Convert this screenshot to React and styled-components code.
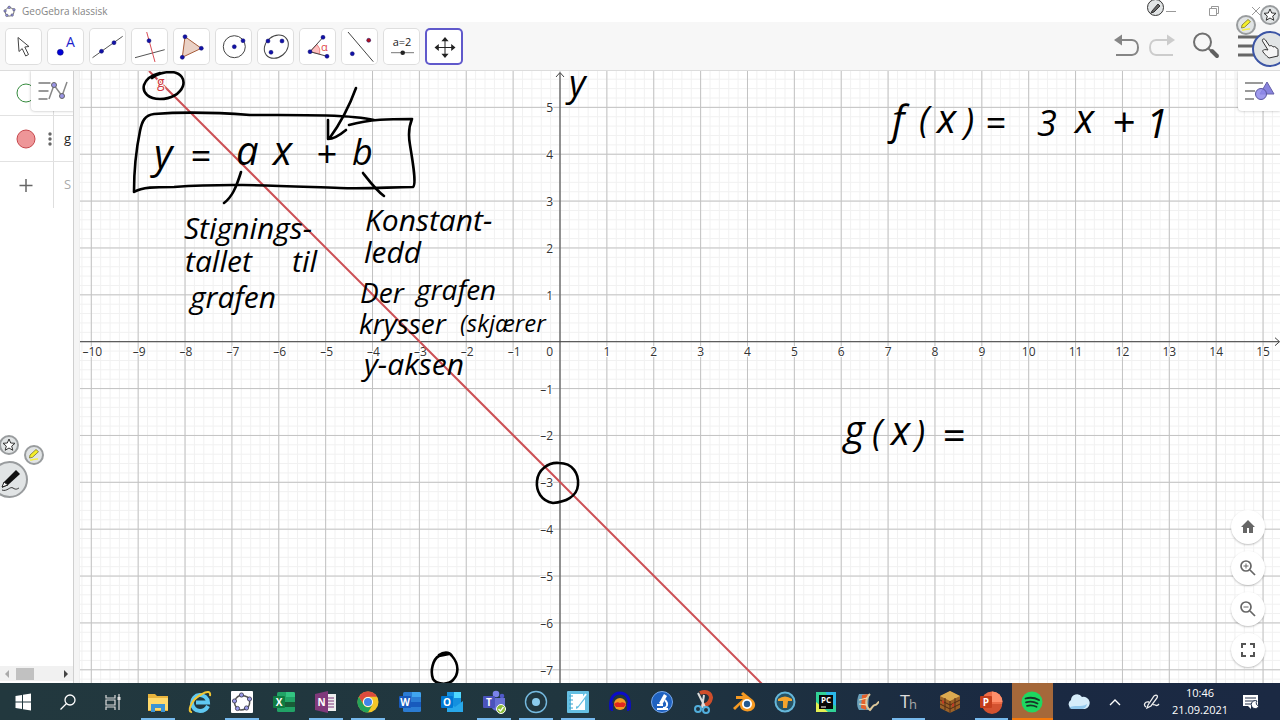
import React from "react";
import styled, { createGlobalStyle, css } from "styled-components";

const GlobalStyle = createGlobalStyle`
  *, *::before, *::after { box-sizing: border-box; }
  body { margin: 0; background: #fff; font-family: "Open Sans", "Noto Sans", sans-serif; overflow: hidden; }
  button { font: inherit; color: inherit; margin: 0; padding: 0; border: 0; background: none; cursor: pointer; }
  svg { display: block; }
`;

/* ---------- frame ---------- */

const Screen = styled.div`
  position: relative;
  display: grid;
  grid-template-rows: 22px 49px minmax(0, 1fr) 37px;
  height: 100vh;
`;

const TitleBar = styled.header`
  display: flex;
  align-items: center;
  gap: 6px;
  padding: 0 2px 0 3px;
  background: #fff;
`;

const Title = styled.h1`
  flex: 1;
  margin: 0;
  font-size: 10px;
  line-height: 22px;
  font-weight: 400;
  color: #858585;
`;

const WindowButton = styled.button`
  display: grid;
  place-items: center;
  width: 43px;
  height: 20px;
  margin-left: -6px;
  padding-right: ${(p) => (p.$last ? "2px" : "0")};
`;

const ToolBar = styled.nav`
  display: flex;
  align-items: center;
  padding: 0 17px 0 5px;
  background: #f7f7f7;
  border-bottom: 1px solid #dcdcdc;
`;

const ToolGroup = styled.div`
  display: flex;
  flex: 1;
  gap: 5px;
`;

const ToolButton = styled.button`
  width: 37px;
  height: 37px;
  border-radius: 5px;
  background: #fff;
  box-shadow: inset 0 0 0 1px #dedede;
  ${(p) =>
    p.$active &&
    css`
      width: 38px;
      box-shadow: inset 0 0 0 2px #6059cb;
    `}
`;

const Actions = styled.div`
  display: flex;
  align-items: center;
  gap: 18px;
`;

const History = styled.div`
  display: flex;
  gap: 8px;
`;

const Work = styled.main`
  display: flex;
  min-height: 0;
`;

/* ---------- algebra panel ---------- */

const AlgebraPanel = styled.aside`
  position: relative;
  display: flex;
  flex-direction: column;
  flex: 0 0 74px;
  border-right: 1px solid #cfcfcf;
  background: #fff;
  overflow: hidden;
`;

const AlgebraRow = styled.div`
  display: grid;
  grid-template-columns: 54px 1fr;
  height: ${(p) => (p.$first ? "45px" : "46px")};
  border-bottom: ${(p) => (p.$last ? "0" : "1px solid #e2e2e2")};
`;

const Marker = styled.div`
  display: flex;
  align-items: center;
  justify-content: flex-end;
  gap: 12px;
  border-right: 1px solid #dedede;
  padding-right: ${(p) => (p.$wide ? "17px" : "0")};
`;

const Expression = styled.div`
  padding-left: 10px;
  font-size: 13px;
  line-height: 44px;
  color: ${(p) => (p.$muted ? "#aaa" : "#222")};
  white-space: nowrap;
`;

const StyleButton = styled.button`
  position: absolute;
  top: 0;
  ${(p) => (p.$side === "left" ? "left: 31px; width: 43px;" : "right: 0; width: 42px;")}
  height: 40px;
  background: #fff;
  border-radius: 0 0 0 4px;
  box-shadow: 0 0 3px rgba(0, 0, 0, 0.3);
`;

const ScrollBar = styled.div`
  display: flex;
  align-items: center;
  gap: 6px;
  height: 15px;
  margin: auto 0 2px;
  padding: 0 4px;
  background: #f1f1f1;
`;

const Thumb = styled.div`
  width: 18px;
  height: 12px;
  background: #c1c1c1;
  margin-right: auto;
`;

const Splitter = styled.div`
  flex: 0 0 6px;
  background: #f5f5f5;
  border-right: 1px solid #eee;
`;

/* ---------- graphics view ---------- */

const GraphView = styled.section`
  position: relative;
  flex: 1;
  min-width: 0;
  overflow: hidden;
`;

const Plot = styled.svg`
  width: 100%;
  height: 100%;
`;

const AxisLabel = styled.text`
  font-family: "Open Sans", "Noto Sans", sans-serif;
  font-size: ${(p) => (p.$name ? 14 : 12)}px;
  fill: ${(p) => (p.$name ? "#d03b42" : "#333")};
  stroke: #fff;
  stroke-width: 2px;
  paint-order: stroke;
`;

const Note = styled.text`
  font-family: "Open Sans", "Noto Sans", sans-serif;
  font-style: italic;
  font-size: ${(p) => p.$size}px;
  fill: #000;
`;

const ZoomControls = styled.div`
  position: absolute;
  right: 15px;
  bottom: 16px;
  display: flex;
  flex-direction: column;
  gap: 7px;
`;

const RoundButton = styled.button`
  display: grid;
  place-items: center;
  width: 34px;
  height: 34px;
  border-radius: 50%;
  background: #fff;
  box-shadow: 0 1px 2px rgba(0, 0, 0, 0.25);
`;

/* ---------- floating pen menu ---------- */

const PenButton = styled.button`
  position: absolute;
  left: ${(p) => p.$x};
  top: ${(p) => p.$y}px;
  display: grid;
  place-items: center;
  width: ${(p) => p.$size}px;
  height: ${(p) => p.$size}px;
  border-radius: 50%;
  border: ${(p) => (p.$blue ? "2px solid #3c55a5" : p.$dark ? "1px solid #333" : "2px solid #999c9e")};
  background: #e1e4e5;
`;

/* ---------- task bar ---------- */

const TaskBar = styled.footer`
  display: flex;
  background: linear-gradient(90deg, #22383e 0%, #20363f 45%, #1a2942 80%, #1b2943 100%);
`;

const TaskItem = styled.button`
  position: relative;
  flex: 1;
  display: grid;
  place-items: center;
  min-width: 0;
  background: ${(p) => (p.$alert ? "#a5683a" : "none")};
  &::after {
    content: "";
    display: ${(p) => (p.$open || p.$alert ? "block" : "none")};
    position: absolute;
    left: ${(p) => (p.$alert ? "0" : "4px")};
    right: ${(p) => (p.$alert ? "0" : "4px")};
    bottom: 0;
    height: 2px;
    background: ${(p) => (p.$alert ? "#f5790b" : "#76b9ed")};
  }
`;

const SystemGroup = styled.div`
  display: flex;
  flex: 0 0 137px;
  padding-right: 2px;
`;

const AppGroup = styled.div`
  display: flex;
  flex: 1;
  min-width: 0;
  ${TaskItem}:nth-child(-n + 12) {
    flex: 0 1 42px;
  }
`;

const Tray = styled.div`
  display: flex;
  align-items: center;
  flex: 0 0 227px;
  padding-left: 8px;
`;

const TrayButton = styled.button`
  display: grid;
  place-items: center;
  width: ${(p) => (p.$wide ? "40px" : "34px")};
  height: 37px;
`;

const Clock = styled.time`
  width: 62px;
  font-size: 11px;
  line-height: 17px;
  text-align: center;
  color: #fff;
  padding-bottom: 2px;
`;

/* ---------- tool icons ---------- */

const Dot = ({ x, y, r = 2, fill = "#1111a8" }) => <circle cx={x} cy={y} r={r} fill={fill} stroke="#11116a" strokeWidth=".5" />;

const TOOLS = [
  { name: "Move", art: <path d="M13 9.5 24 18.5 19.8 19 23.5 26.5 20.7 28 17.2 20.6 14 23.5Z" fill="#fff" stroke="#444" /> },
  { name: "Point", art: <><Dot x={13.3} y={24.3} r={3} fill="#0000d8" /><text x="19" y="19" fontSize="14" fill="#1d1dcc">A</text></> },
  { name: "Line", art: <><path d="M3.5 29.7 33.7 8.3" stroke="#555" /><Dot x={12.5} y={23.3} /><Dot x={25} y={14.7} /></> },
  { name: "Perpendicular line", art: <><path d="M4 29.7 33.7 21.7" stroke="#555" /><path d="M15.7 4 24 34" stroke="#d94e57" /><Dot x={18} y={12.7} /></> },
  { name: "Polygon", art: <><path d="M12 8.7 28.3 20.3 9.3 29.3Z" fill="#ead1c5" stroke="#a65b39" /><Dot x={12} y={8.7} /><Dot x={28.3} y={20.3} /><Dot x={9.3} y={29.3} /></> },
  { name: "Circle", art: <><circle cx="19.3" cy="18.7" r="11" stroke="#444" /><Dot x={19.3} y={18.7} /><Dot x={28} y={12.7} /></> },
  { name: "Ellipse", art: <><ellipse cx="19.3" cy="18.7" rx="13" ry="10.5" transform="rotate(-40 19.3 18.7)" stroke="#444" /><Dot x={11} y={13} /><Dot x={25} y={13} /><Dot x={14} y={24.3} /></> },
  { name: "Angle", art: <><path d="M11 23.7 18 16.5A10 10 0 0 1 20.7 26Z" fill="#ffc0c0" stroke="#ef8888" /><path d="M24 9.3 11 23.7 28 28.3" stroke="#444" /><Dot x={24} y={9.3} /><Dot x={11} y={23.7} /><Dot x={28} y={28.3} /><text x="22" y="23" fontSize="11" fill="#e04848">α</text></> },
  { name: "Reflect", art: <><path d="M7 4 32.3 33.7" stroke="#444" /><Dot x={27.7} y={12.3} fill="#b0101e" /><Dot x={11.3} y={25.7} /></> },
  { name: "Slider", art: <><text x="19" y="18" fontSize="11" textAnchor="middle" fill="#222">a=2</text><path d="M8 24.7H31" stroke="#777" /><circle cx="19.7" cy="24.7" r="2.3" fill="#222" /></> },
  { name: "Move graphics view", active: true, art: <><path d="M20 11V28M11.500 19.500H28.500" stroke="#222" /><path d="m20 9 3.600 4.300h-7.200ZM20 30l3.600-4.300h-7.200ZM9.500 19.500l4.300-3.600v7.200ZM30.500 19.500l-4.300-3.600v7.200Z" fill="#222" /></> },
];

const HighlighterArt = () => (
  <svg width="14" height="14" viewBox="0 0 14 14" fill="none">
    <path d="m3 7 6-5.500 2.500 2.200-6 5.600-3 .7Z" fill="#f5ef28" stroke="#77752c" strokeWidth=".8" />
    <path d="M3 12c3 0 4-1.500 8-1" stroke="#f4ef4a" strokeWidth="1.500" />
  </svg>
);

const StarArt = () => (
  <svg width="14" height="14" viewBox="0 0 14 14">
    <path d="m7 1 1.7 4 4.3.3-3.3 2.8 1.1 4.2L7 10l-3.8 2.3 1.1-4.2L1 5.3 5.3 5Z" fill="#fff" stroke="#333" />
  </svg>
);

const GeoGebraMark = ({ size }) => (
  <svg width={size} height={size} viewBox="0 0 22 22">
    <path d="M10.500 4.500C15 5 18 6.500 18.500 8.500C19 12 18 16 15.500 17.500C12 19 8 19.500 6.500 17.500C4 15 3 12 4 9.500C5 7 7 4.500 10.500 4.500Z" fill="none" stroke="#555" strokeWidth="1.400" />
    {[[10.5, 4], [18.5, 8], [15.5, 17], [6.5, 17.5], [3.5, 10]].map(([x, y]) => (
      <circle key={`${x}-${y}`} cx={x} cy={y} r="2.100" fill="#9999e8" stroke="#353545" strokeWidth=".8" />
    ))}
  </svg>
);

/* ---------- plot data ---------- */

const UNIT = 46.87;
const OX = 560;
const OY = 341.7;
const range = (a, b) => Array.from({ length: b - a + 1 }, (_, i) => a + i);
const px = (n) => OX + n * UNIT;
const py = (n) => OY - n * UNIT;
const label = (n) => (n < 0 ? `–${-n}` : `${n}`);

const NOTES = [
  { x: 569, y: 96, size: 36, text: "y" },
  { x: 154, y: 168, size: 40, text: "y" },
  { x: 190, y: 169, size: 36, text: "=" },
  { x: 236, y: 165, size: 40, text: "a" },
  { x: 273, y: 165, size: 40, text: "x" },
  { x: 316, y: 167, size: 36, text: "+" },
  { x: 352, y: 165, size: 36, text: "b" },
  { x: 184, y: 239, size: 30, text: "Stignings-" },
  { x: 185, y: 272, size: 30, text: "tallet" },
  { x: 292, y: 272, size: 30, text: "til" },
  { x: 190, y: 308, size: 30, text: "grafen" },
  { x: 365, y: 231, size: 30, text: "Konstant-" },
  { x: 364, y: 263, size: 30, text: "ledd" },
  { x: 360, y: 303, size: 28, text: "Der" },
  { x: 416, y: 300, size: 28, text: "grafen" },
  { x: 359, y: 334, size: 28, text: "krysser" },
  { x: 460, y: 332, size: 24, text: "(skjærer" },
  { x: 364, y: 375, size: 30, text: "y-aksen" },
  { x: 892, y: 134, size: 40, text: "f" },
  { x: 919, y: 132, size: 36, text: "(" },
  { x: 937, y: 133, size: 40, text: "x" },
  { x: 964, y: 134, size: 36, text: ")" },
  { x: 985, y: 136, size: 36, text: "=" },
  { x: 1037, y: 136, size: 36, text: "3" },
  { x: 1075, y: 133, size: 40, text: "x" },
  { x: 1112, y: 137, size: 40, text: "+" },
  { x: 1146, y: 138, size: 40, text: "1" },
  { x: 844, y: 444, size: 40, text: "g" },
  { x: 872, y: 445, size: 36, text: "(" },
  { x: 891, y: 445, size: 40, text: "x" },
  { x: 915, y: 446, size: 36, text: ")" },
  { x: 942, y: 450, size: 40, text: "=" },
];

const INK = [
  "M152 78C158 73 164 72 172 72C181 73 185 79 183 86C180 94 171 99 160 99C149 99 142 93 144 85C146 79 152 75 160 73",
  "M374 120C350 114 290 115 250 115C210 112 180 112 154 114C145 115 142 121 140 131C135 155 134 175 134 192C142 187 155 187 174 187C230 183 280 186 340 188C370 189 390 187 413 187C417 184 412 158 410 145C408 134 409 126 412 119C390 119 370 119 349 125",
  "M356 88C348 110 340 124 329 139M328 120V139C334 139 340 135 346 130",
  "M241 172C236 188 232 197 224 203",
  "M363 173C370 182 376 190 384 196",
  "M559 463C573 463 579 474 578 485C577 497 565 502 553 503C541 501 536 491 537 481C538 470 548 462 559 463Z",
  "M439 655C443 652 449 651 452 656C459 664 459 674 453 680C447 686 436 684 433 679C430 671 433 659 439 656L449 654",
];

function Graph() {
  return (
    <Plot viewBox="80 71 1200 612" preserveAspectRatio="xMinYMin slice" role="img" aria-label="Graph of g with handwritten notes">
      <g stroke="#f1f1f1">
        {range(-51, 77).map((i) => <path key={`v${i}`} d={`M${px(i / 5)} 71V683`} />)}
        {range(-37, 29).map((i) => <path key={`h${i}`} d={`M80 ${py(i / 5)}H1280`} />)}
      </g>
      <g stroke="#c2c2c2">
        {range(-10, 15).map((i) => <path key={`v${i}`} d={`M${px(i)} 71V683`} />)}
        {range(-7, 5).map((i) => <path key={`h${i}`} d={`M80 ${py(i)}H1280`} />)}
      </g>
      <g stroke="#444" fill="none">
        <path d="M560 683V73M556 77 560 72.500 564 77" />
        <path d="M80 341.700H1279M1275 337.700 1279.500 341.700 1275 345.700" />
      </g>
      {range(-10, 15).filter(Boolean).map((i) => (
        <AxisLabel key={`x${i}`} x={px(i) + (i < 0 ? 1 : 0)} y="356" textAnchor="middle">{label(i)}</AxisLabel>
      ))}
      <AxisLabel x="553" y="356" textAnchor="end">0</AxisLabel>
      {range(-7, 5).filter(Boolean).map((i) => (
        <AxisLabel key={`y${i}`} x="553" y={py(i) + 5} textAnchor="end">{label(i)}</AxisLabel>
      ))}
      <path d="M149 71 762 684" stroke="#cc5055" strokeWidth="2" />
      <AxisLabel $name x="157" y="87">g</AxisLabel>
      {NOTES.map((n) => <Note key={`${n.x}-${n.y}`} x={n.x} y={n.y} $size={n.size}>{n.text}</Note>)}
      <g fill="none" stroke="#000" strokeWidth="2.600" strokeLinecap="round" strokeLinejoin="round">
        {INK.map((d) => <path key={d} d={d} />)}
      </g>
    </Plot>
  );
}

/* ---------- task bar icons, all on a 24 unit canvas ---------- */

const OfficeArt = ({ letter, tile, colors }) => (
  <>
    <rect x="5" y="2" width="18" height="20" rx="1.500" fill={colors[0]} />
    <path d="M14 2h7.500a1.500 1.500 0 0 1 1.500 1.500V7h-9Z" fill={colors[1]} />
    <path d="M5 12h18v5H5Z" fill={colors[2]} />
    <rect x="1" y="6" width="12" height="12" rx="1" fill={tile} />
    <text x="7" y="15.500" fontSize="10" fontWeight="700" textAnchor="middle" fill="#fff">{letter}</text>
  </>
);

const APPS = [
  { name: "File Explorer", open: true, art: <><path d="M2 4h7l2 2h11v15H2Z" fill="#e9b43d" /><path d="M2 8h20v12H2Z" fill="#ffd96b" /><path d="M5 22v-8h14v8h-4v-4H9v4Z" fill="#3c94d4" /></> },
  { name: "Internet Explorer", art: <><path d="M20 16c-2 4-5 5-8 5a8 8 0 1 1 8-8.500H8" fill="none" stroke="#60c9f1" strokeWidth="4" /><path d="M4 22C-1 23 2 10 14 4C19 1 23 1 22 6" fill="none" stroke="#f2c633" strokeWidth="2" /></> },
  { name: "GeoGebra", open: true, art: <><rect x="1" y="1" width="22" height="22" rx="1" fill="#fff" /><g transform="translate(1 1)"><GeoGebraMark size={22} /></g></> },
  { name: "Excel", art: <OfficeArt letter="X" tile="#107c41" colors={["#21a366", "#33c481", "#185c37"]} /> },
  { name: "OneNote", open: true, art: <><rect x="10" y="4" width="12" height="17" fill="#eee" /><path d="M13 8h7M13 11h7M13 14h7M13 17h7" stroke="#80397b" /><path d="m1 4 13-3v22L1 20Z" fill="#80397b" /><text x="7.500" y="16" fontSize="10" fontWeight="700" textAnchor="middle" fill="#fff">N</text></> },
  { name: "Chrome", open: true, art: <><circle cx="12" cy="12" r="10.500" fill="#f5c629" /><path d="M2.900 6.700A10.500 10.500 0 0 1 21.100 6.700H12a5.300 5.300 0 0 0-4.600 8Z" fill="#dd4b3e" /><path d="M2.900 6.700A10.500 10.500 0 0 0 12 22.500l4.600-7.900a5.300 5.300 0 0 1-9.200 0Z" fill="#24a35a" /><circle cx="12" cy="12" r="5" fill="#fff" /><circle cx="12" cy="12" r="4" fill="#4285e8" /></> },
  { name: "Word", art: <OfficeArt letter="W" tile="#185abd" colors={["#2b7cd3", "#41a5ee", "#185abd"]} /> },
  { name: "Outlook", art: <><rect x="7" y="2" width="14" height="17" fill="#1490df" /><path d="M14 2h7v6h-7Z" fill="#50d9ff" /><path d="m7 11 8 6 8-6v11H7Z" fill="#28a8ea" /><rect x="1" y="6" width="12" height="12" rx="1" fill="#0078d4" /><text x="7" y="15.500" fontSize="10" fontWeight="700" textAnchor="middle" fill="#fff">O</text></> },
  { name: "Teams", open: true, art: <><circle cx="14" cy="4" r="3.300" fill="#7b83eb" /><circle cx="20" cy="6" r="2.300" fill="#5059c9" /><path d="M9 8h14v7a6 6 0 0 1-7 6c-4 0-7-3-7-6Z" fill="#6670d5" /><rect x="1" y="6" width="12" height="12" rx="1" fill="#4b53bc" /><text x="7" y="15.500" fontSize="10" fontWeight="700" textAnchor="middle" fill="#fff">T</text><circle cx="19" cy="19" r="4.500" fill="#8cbd38" stroke="#fff" /><path d="m16.500 19 2 2 3-4" fill="none" stroke="#fff" strokeWidth="1.300" /></> },
  { name: "Recorder", open: true, art: <><circle cx="12" cy="12" r="10.500" fill="none" stroke="#75b9df" strokeWidth="1.400" /><circle cx="12" cy="12" r="4" fill="#8bcbed" /></> },
  { name: "Notebook", open: true, art: <><rect x="1" y="1" width="22" height="22" rx="1" fill="#65bfe2" /><path d="M5 4h12v3l-7 10v2l2-1 7-9v11H5Z" fill="#fff" /><path d="M3 6h4M3 10h4M3 14h4M3 18h4" stroke="#3ba0c9" /><path d="m11 16 9-12" stroke="#fff" strokeWidth="2" /></> },
  { name: "Audacity", art: <><path d="M3 20C1 8 6 3 12 3s11 5 9 17" fill="none" stroke="#0b0bc9" strokeWidth="3" /><path d="M1 13h4v8H3ZM19 13h4l-2 8h-2Z" fill="#1010b8" /><ellipse cx="12" cy="14" rx="6" ry="6" fill="#f29b22" /><path d="M6 14q3-3 6-1 3-2 6 1l-2 3H8Z" fill="#df271f" /></> },
  { name: "Microscope", art: <><circle cx="12" cy="12" r="10.500" fill="#1f62c0" stroke="#79aaed" /><path d="m9 13 5-9 3 2-5 9Z" fill="#fff" /><path d="M15 10c4 4 2 8-2 8M7 19h11M7 15h6" fill="none" stroke="#fff" strokeWidth="1.800" /></> },
  { name: "Snipping Tool", art: <><path d="M9 3c8-3 13 2 10 8-2 4-6 5-8 3" fill="none" stroke="#cf4e2b" strokeWidth="4" /><path d="m7 3 7 14M13 5l-2 13" stroke="#ddd" strokeWidth="2" /><circle cx="7" cy="19" r="3" fill="none" stroke="#52afdc" strokeWidth="2" /><circle cx="15" cy="20" r="3" fill="none" stroke="#52afdc" strokeWidth="2" /></> },
  { name: "Blender", art: <><path d="M1 18 11 9H4V6h7L9 4l2-2 10 8c6 7-2 13-8 11-4-1-5-4-5-6l-5 5Z" fill="#f59a23" /><circle cx="15" cy="14" r="5" fill="#fff" /><circle cx="15" cy="14" r="3.200" fill="#255a92" /></> },
  { name: "Typing", art: <><circle cx="12" cy="12" r="9.500" fill="#285364" stroke="#65b7da" strokeWidth="2" /><path d="M5 9q7-5 14 0v2h-4l-1 7h-4v-7H5Z" fill="#f4a42d" /></> },
  { name: "PyCharm", art: <><path d="M2 2h20v20H2Z" fill="#32d296" /><path d="m12 2 10 0v14l-8-4Z" fill="#2bb8e9" /><path d="M2 12v10h12Z" fill="#e4ef52" /><rect x="5" y="5" width="14" height="14" fill="#080808" /><text x="12" y="13" fontSize="8" fontWeight="700" textAnchor="middle" fill="#fff">PC</text><path d="M7 17h5" stroke="#fff" /></> },
  { name: "Film", art: <><path d="M3 4h10l-1 16H3C0 16 1 8 3 4Z" fill="#6aa1bb" /><path d="m6 5 6-1-2 16-5-2Z" fill="#e5622c" /><path d="M14 4c-5 5-5 12 0 16 2-2 3-5 5-5s3-3 4-3" fill="none" stroke="#ddc89b" strokeWidth="2" /><path d="m3 10 8-2M3 14l8 1" stroke="#f6e6ba" /></> },
  { name: "Thonny", open: true, art: <><text x="3" y="18" fontSize="18" fill="#ddd">T</text><text x="12" y="19" fontSize="13" fill="#aaa">h</text></> },
  { name: "Minetest", art: <><path d="m12 1 10 5v12l-10 5-10-5V6Z" fill="#9b6227" /><path d="m12 1 10 5-10 5L2 6Z" fill="#dcaa50" /><path d="M12 11v12M2 10l10 5 10-5M2 14l10 5 10-5M7 8v12M17 8v12" stroke="#542c16" fill="none" /><path d="m4 10 2 1v3l-2-1ZM14 14l2-1v3l-2 1Z" fill="#c33c25" /></> },
  { name: "PowerPoint", open: true, art: <><circle cx="13" cy="12" r="10.500" fill="#ed6c47" /><path d="M13 1.500A10.500 10.500 0 0 1 23.500 12H13Z" fill="#ff8f6b" /><path d="M3 14h20a10 10 0 0 1-20 0Z" fill="#d35230" /><rect x="1" y="6" width="12" height="12" rx="1" fill="#c43e1c" /><text x="7" y="15.500" fontSize="10" fontWeight="700" textAnchor="middle" fill="#fff">P</text></> },
  { name: "Spotify", alert: true, art: <><circle cx="12" cy="12" r="10.500" fill="#1ed760" /><path d="M5.500 8.500q7-2 13.500 1.500M6 12.300q6-1.800 11.500 1.200M7 15.800q5-1.300 9.500 1" fill="none" stroke="#183528" strokeWidth="1.800" strokeLinecap="round" /></> },
];

const TaskArt = ({ children }) => <svg width="24" height="24" viewBox="0 0 24 24">{children}</svg>;

export default function App() {
  return (
    <>
      <GlobalStyle />
      <Screen>
        <TitleBar>
          <GeoGebraMark size={13} />
          <Title>GeoGebra klassisk</Title>
          <WindowButton aria-label="Minimize"><svg width="10" height="10"><path d="M0 5.500H10" stroke="#999" /></svg></WindowButton>
          <WindowButton aria-label="Restore"><svg width="10" height="10" fill="none" stroke="#999"><path d="M.5 2.500H7.500V9.500H.5ZM2.500 2V.5H9.500V7.500H8" /></svg></WindowButton>
          <WindowButton $last aria-label="Close"><svg width="10" height="10"><path d="m1 1 8 8M9 1 1 9" stroke="#999" /></svg></WindowButton>
        </TitleBar>

        <ToolBar>
          <ToolGroup>
            {TOOLS.map((t) => (
              <ToolButton key={t.name} $active={t.active} aria-label={t.name}>
                <svg width="37" height="37" viewBox="0 0 37 37" fill="none">{t.art}</svg>
              </ToolButton>
            ))}
          </ToolGroup>
          <Actions>
            <History>
              <button aria-label="Undo"><svg width="27" height="24" fill="none"><path d="M6 6h13c8 0 8 15 0 15H3" stroke="#858585" strokeWidth="2" /><path d="M1 6 9 .5v11Z" fill="#858585" /></svg></button>
              <button aria-label="Redo"><svg width="27" height="24" fill="none"><path d="M21 6H8C0 6 0 21 8 21h17" stroke="#ccc" strokeWidth="2" /><path d="m27 6-8-5.500v11Z" fill="#ccc" /></svg></button>
            </History>
            <button aria-label="Search"><svg width="27" height="28" fill="none"><circle cx="9.500" cy="10" r="8.500" stroke="#707070" strokeWidth="2" /><path d="m15 16 4 4" stroke="#707070" strokeWidth="2" /><path d="m19 19 5 5" stroke="#606060" strokeWidth="4" strokeLinecap="round" /></svg></button>
            <button aria-label="Menu"><svg width="25" height="22"><path d="M0 2h25M0 11h25M0 20h25" stroke="#666" strokeWidth="3" /></svg></button>
          </Actions>
        </ToolBar>

        <Work>
          <AlgebraPanel>
            <AlgebraRow $first>
              <Marker $wide><svg width="20" height="20"><circle cx="10" cy="10" r="9" fill="#fff" stroke="#348a3c" /></svg></Marker>
              <Expression />
            </AlgebraRow>
            <AlgebraRow>
              <Marker>
                <svg width="20" height="20"><circle cx="10" cy="10" r="9" fill="#ee9698" stroke="#c6474c" /></svg>
                <svg width="5" height="18" fill="#666"><circle cx="2" cy="4" r="1.700" /><circle cx="2" cy="9" r="1.700" /><circle cx="2" cy="14" r="1.700" /></svg>
              </Marker>
              <Expression>g</Expression>
            </AlgebraRow>
            <AlgebraRow $last>
              <Marker $wide><svg width="20" height="20"><path d="M10 4v13M3.500 10.500h13" stroke="#666" strokeWidth="1.500" /></svg></Marker>
              <Expression $muted>S</Expression>
            </AlgebraRow>
            <StyleButton $side="left" aria-label="Algebra style bar">
              <svg width="43" height="40" fill="none"><path d="M7.500 12h12M7.500 20h10M7.500 28h9" stroke="#999" strokeWidth="2" /><path d="M18 28 23 14 31 25 36 11" stroke="#888" strokeWidth="1.500" /><circle cx="23" cy="14" r="2.500" fill="#9a95e6" stroke="#666" /><circle cx="31" cy="25" r="2.500" fill="#9a95e6" stroke="#666" /></svg>
            </StyleButton>
            <ScrollBar>
              <svg width="6" height="8"><path d="M5 0v8L1 4Z" fill="#aaa" /></svg>
              <Thumb />
              <svg width="6" height="8"><path d="M1 0v8l4-4Z" fill="#444" /></svg>
            </ScrollBar>
          </AlgebraPanel>
          <Splitter />
          <GraphView>
            <Graph />
            <StyleButton $side="right" aria-label="Graphics style bar">
              <svg width="42" height="40" fill="none"><path d="M7 12h18M7 20h10M7 28h9" stroke="#999" strokeWidth="2" /><path d="m29 11 7 12H22Z" fill="#8883dd" stroke="#6660a8" /><circle cx="23" cy="23" r="5.500" fill="#8f8aeb" fillOpacity=".85" stroke="#5b569f" /></svg>
            </StyleButton>
            <ZoomControls>
              <RoundButton aria-label="Home"><svg width="16" height="16"><path d="M8 1 1 8h2v6h4v-5h2v5h4V8h2Z" fill="#666" /></svg></RoundButton>
              <RoundButton aria-label="Zoom in"><svg width="16" height="16" fill="none" stroke="#666" strokeWidth="1.700"><circle cx="6" cy="6" r="5" /><path d="m10 10 5 5" /><path d="M3.500 6h5M6 3.500v5" strokeWidth="1" /></svg></RoundButton>
              <RoundButton aria-label="Zoom out"><svg width="16" height="16" fill="none" stroke="#666" strokeWidth="1.700"><circle cx="6" cy="6" r="5" /><path d="m10 10 5 5" /><path d="M3.500 6h5" strokeWidth="1" /></svg></RoundButton>
              <RoundButton aria-label="Full screen"><svg width="14" height="14" fill="none" stroke="#555" strokeWidth="2"><path d="M1 5V1h4M9 1h4v4M13 9v4H9M5 13H1V9" /></svg></RoundButton>
            </ZoomControls>
          </GraphView>
        </Work>

        <TaskBar>
          <SystemGroup>
            <TaskItem aria-label="Start"><TaskArt><path d="m4.500 6 6.500-1v6.500H4.500ZM12 4.800l8-1.300v8h-8ZM4.500 12.500H11V19l-6.500-1ZM12 12.500h8v8l-8-1.300Z" fill="#fff" /></TaskArt></TaskItem>
            <TaskItem aria-label="Search"><TaskArt><g fill="none" stroke="#fff" strokeWidth="1.300"><circle cx="14" cy="10" r="5" /><path d="m10.500 13.500-6 6" /></g></TaskArt></TaskItem>
            <TaskItem aria-label="Task view"><TaskArt><g fill="none" stroke="#ddd" strokeWidth="1.200"><path d="M5 5v3h9V5M5 20v-3h9v3M5 10h9v5H5ZM18 4v16" /><path d="M16.500 8.500h3" strokeWidth="3" /></g></TaskArt></TaskItem>
          </SystemGroup>
          <AppGroup>
            {APPS.map((a) => (
              <TaskItem key={a.name} aria-label={a.name} $open={a.open} $alert={a.alert}><TaskArt>{a.art}</TaskArt></TaskItem>
            ))}
          </AppGroup>
          <Tray>
            <TrayButton aria-label="Weather"><TaskArt><path d="M6 19a5 5 0 0 1-1-9 6 6 0 0 1 11-3 6 6 0 0 1 3 12Z" fill="#d5ecfa" /><path d="M3 18c5-4 12 0 18-4-1 4-3 5-6 5H6Z" fill="#91c7ec" /></TaskArt></TrayButton>
            <TrayButton $wide aria-label="Show hidden icons"><svg width="12" height="8" fill="none"><path d="m1 7 5-5 5 5" stroke="#fff" strokeWidth="1.400" /></svg></TrayButton>
            <TrayButton aria-label="Pen workspace"><svg width="18" height="18" fill="none" stroke="#eee" strokeWidth="1.300"><path d="m5 12 6-9c3-2 4 0 3 2l-6 8-4 2ZM6 9C2 8 0 12 3 14M10 12c2-2 3 3 6-1" /></svg></TrayButton>
            <Clock>10:46<br />21.09.2021</Clock>
            <TrayButton $wide aria-label="Notifications"><svg width="18" height="18"><path d="M1 2h15v11H9v3l-3-3H1Z" fill="#fff" /><path d="M3 5h11M3 8h11M3 11h6" stroke="#26334c" /><path d="M15 8a4 4 0 1 0 2 5 3 3 0 0 1-2-5" fill="#fff" stroke="#26334c" /></svg></TrayButton>
          </Tray>
        </TaskBar>

        <PenButton $x="calc(100% - 133px)" $y={-1} $size={17} $dark aria-label="Pen"><svg width="12" height="12"><path d="m2 9 6-7 2 2-6 6-3 1Z" fill="#666" stroke="#333" /></svg></PenButton>
        <PenButton $x="calc(100% - 44px)" $y={15} $size={20} aria-label="Highlighter"><HighlighterArt /></PenButton>
        <PenButton $x="calc(100% - 20px)" $y={5} $size={20} aria-label="Favourites"><StarArt /></PenButton>
        <PenButton $x="calc(100% - 28px)" $y={31} $size={36} $blue aria-label="Pointer"><svg width="20" height="22"><path d="M8 12 3 4C1 1 4 0 5.500 2l4 6c2-1 3 0 3.500 1 2-1 3 0 3 1 2 0 2 1 2 3v5L9 20c-3-2-5-5-6-6-1-2 1-3 5-2Z" fill="#f5f5f5" stroke="#333" /></svg></PenButton>
        <PenButton $x="-1px" $y={435} $size={20} aria-label="Favourite pens"><StarArt /></PenButton>
        <PenButton $x="24px" $y={445} $size={20} aria-label="Yellow highlighter"><HighlighterArt /></PenButton>
        <PenButton $x="-9px" $y={461} $size={37} aria-label="Black pen"><svg width="22" height="24"><path d="m5 14 12-12 4 4L9 17l-6 3Z" fill="#111" /><path d="m5 14 4 3-6 2Z" fill="#fff" stroke="#222" /><path d="M3 22c5 2 8-4 11-2s4 1 6 0" fill="none" stroke="#333" /></svg></PenButton>
      </Screen>
    </>
  );
}
